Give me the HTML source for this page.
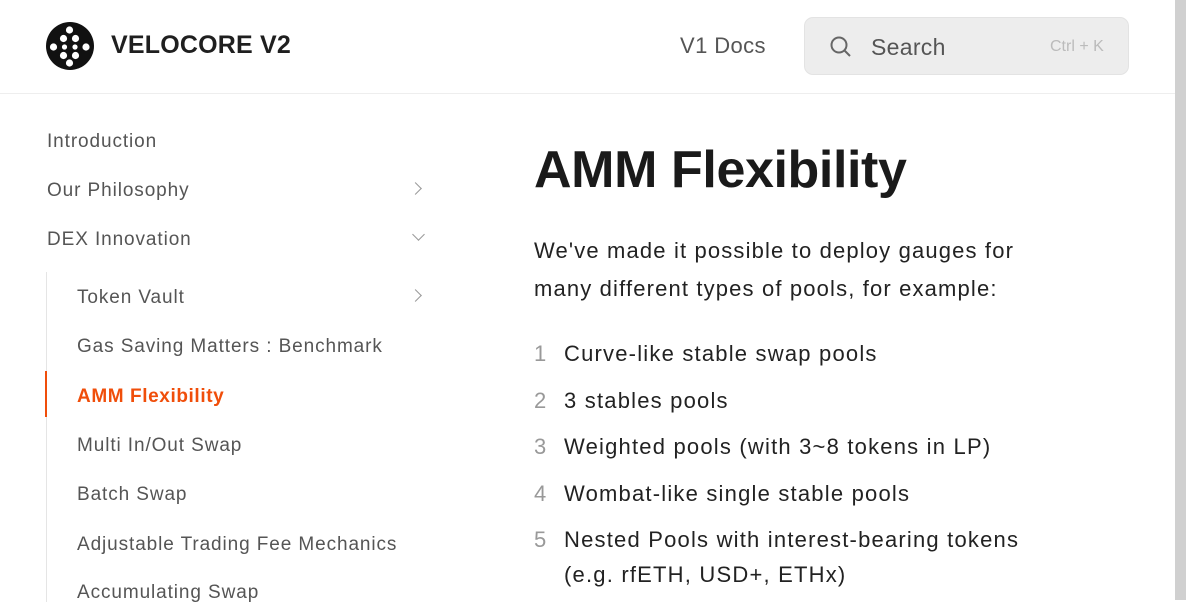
<!DOCTYPE html>
<html><head><style>
*{margin:0;padding:0;box-sizing:border-box}
body{width:1186px;height:600px;overflow:hidden;background:#fff;font-family:"Liberation Sans",sans-serif;color:#222;position:relative}
.hdr{position:absolute;left:0;top:0;width:1175px;height:94px;border-bottom:1px solid #eee}
.brand{position:absolute;left:111px;top:31px;font-size:25px;font-weight:bold;color:#1f1f1f;letter-spacing:0.2px}
.v1{position:absolute;left:680px;top:33px;font-size:22px;color:#555;letter-spacing:0.4px}
.search{position:absolute;left:804px;top:17px;width:325px;height:58px;background:#ededed;border:1px solid #e3e3e3;border-radius:9px}
.search .t{position:absolute;left:66px;top:16px;font-size:23px;color:#555;letter-spacing:0.3px}
.search .k{position:absolute;left:245px;top:20px;font-size:16px;color:#bbb}
.scroll{position:absolute;left:1175px;top:0;width:11px;height:600px;background:#d0d0d0}
.nav a{position:absolute;font-size:19px;color:#555;text-decoration:none;white-space:nowrap;letter-spacing:0.9px;margin-top:2px}
.chev{position:absolute;width:9px;height:9px;border-right:1.5px solid #999;border-bottom:1.5px solid #999}
.vl{position:absolute;left:46px;top:272px;width:1px;height:330px;background:#e5e5e5}
h1{position:absolute;left:534px;top:140px;font-size:52px;font-weight:bold;color:#1a1a1a;letter-spacing:-0.4px}
.p{position:absolute;left:534px;top:232px;font-size:22px;line-height:38px;color:#222;letter-spacing:1.15px}
.li{position:absolute;left:534px;font-size:22px;color:#222;line-height:35px;letter-spacing:1.2px;margin-top:1px}
.li b{display:inline-block;width:30px;font-weight:normal;color:#999;letter-spacing:0}
</style></head><body>
<div class="hdr">
<svg style="position:absolute;left:46px;top:22px" width="48" height="48" viewBox="0 0 48 48">
<circle cx="24" cy="24" r="24" fill="#111"/>
<g fill="#fff">
<circle cx="23.5" cy="8" r="3.6"/><circle cx="17.5" cy="16.5" r="3.6"/><circle cx="29.5" cy="16.5" r="3.6"/>
<circle cx="7.5" cy="25" r="3.6"/><circle cx="18.5" cy="25" r="2.6"/><circle cx="29" cy="25" r="2.6"/><circle cx="40" cy="25" r="3.6"/>
<circle cx="17.5" cy="33.5" r="3.6"/><circle cx="29.5" cy="33.5" r="3.6"/><circle cx="23.5" cy="41" r="3.6"/>
</g></svg>
<div class="brand">VELOCORE V2</div>
<div class="v1">V1 Docs</div>
<div class="search">
<svg style="position:absolute;left:24px;top:17px" width="24" height="24" viewBox="0 0 24 24" fill="none" stroke="#666" stroke-width="2"><circle cx="10" cy="10" r="7.5"/><path d="M15.5 15.5L21 21"/></svg>
<div class="t">Search</div><div class="k">Ctrl + K</div>
</div>
</div>
<div class="scroll"></div>
<div class="nav">
<a style="left:47px;top:129px">Introduction</a>
<a style="left:47px;top:178px">Our Philosophy</a>
<div class="chev" style="left:411px;top:184px;transform:rotate(-45deg)"></div>
<a style="left:47px;top:227px">DEX Innovation</a>
<div class="chev" style="left:414px;top:230px;transform:rotate(45deg)"></div>
<div class="vl"></div>
<a style="left:77px;top:285px">Token Vault</a>
<div class="chev" style="left:411px;top:291px;transform:rotate(-45deg)"></div>
<a style="left:77px;top:334px">Gas Saving Matters : Benchmark</a>
<div style="position:absolute;left:45px;top:371px;width:2px;height:46px;background:#f04e0a"></div>
<a style="left:77px;top:384px;color:#f04e0a;font-weight:bold;letter-spacing:0.6px">AMM Flexibility</a>
<a style="left:77px;top:433px">Multi In/Out Swap</a>
<a style="left:77px;top:482px">Batch Swap</a>
<a style="left:77px;top:532px">Adjustable Trading Fee Mechanics</a>
<a style="left:77px;top:580px">Accumulating Swap</a>
</div>
<h1>AMM Flexibility</h1>
<div class="p">We've made it possible to deploy gauges for<br>many different types of pools, for example:</div>
<div class="li" style="top:335px"><b>1</b>Curve-like stable swap pools</div>
<div class="li" style="top:382px"><b>2</b>3 stables pools</div>
<div class="li" style="top:428px"><b>3</b>Weighted pools (with 3~8 tokens in LP)</div>
<div class="li" style="top:475px"><b>4</b>Wombat-like single stable pools</div>
<div class="li" style="top:521px"><b>5</b>Nested Pools with interest-bearing tokens<br><span style="margin-left:30px">(e.g. rfETH, USD+, ETHx)</span></div>
</body></html>
